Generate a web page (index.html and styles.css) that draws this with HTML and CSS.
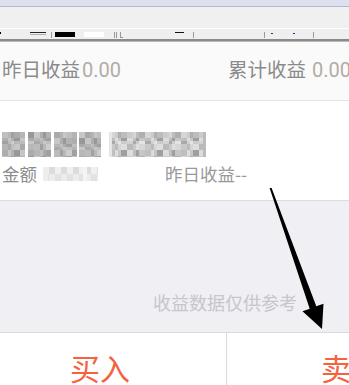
FILE: index.html
```html
<!DOCTYPE html>
<html lang="zh-CN">
<head>
<meta charset="utf-8">
<link rel="stylesheet" href="styles.css">
</head>
<body>
<div class="screen">
  <div class="chrome-top"></div>
  <div class="chrome-tabs"></div>
  <div class="toolbar">
    <i class="tm dot"></i>
    <i class="tm ul"></i>
    <i class="tm vl g5"></i>
    <i class="tm blk"></i>
    <i class="tm wht"></i>
    <i class="tm vl g10"></i>
    <i class="tm vl g1"></i>
    <i class="tm corner"></i>
    <i class="tm hl"></i>
    <i class="tm vl g9"></i>
    <i class="tm vl g70"></i>
    <i class="tm bdot g6"></i>
    <i class="tm bdot g20"></i>
    <i class="tm vl g18"></i>
  </div>

  <div class="summary">
    <div class="sum-item"><span class="lbl">昨日收益</span><span class="num n1">0.00</span></div>
    <div class="sum-item"><span class="lbl">累计收益</span><span class="num n2">0.00</span></div>
  </div>

  <div class="fund">
    <div class="fund-title">
      <span class="mz c1"></span><span class="mz c2"></span><span class="mz c3"></span><span class="mz c4"></span>
      <span class="mz code"></span>
    </div>
    <div class="fund-meta">
      <span class="meta-lbl">金额</span><span class="mz amt"></span>
      <span class="meta-lbl y">昨日收益--</span>
    </div>
  </div>

  <div class="gray-area">
    <p class="note">收益数据仅供参考</p>
  </div>

  <div class="actions">
    <div class="btn buy">买入</div>
    <div class="btn sell">卖出</div>
  </div>

  <svg class="arrow" width="349" height="385" viewBox="0 0 349 385">
    <polygon points="269.6,188 271.6,188 316.3,306.3 323.5,303.8 322,329 302.5,311.2 309.7,308.7" fill="#000"/>
  </svg>
</div>
</body>
</html>
```

FILE: styles.css
```css
html, body {
  margin: 0;
  padding: 0;
  background: #efeff4;
}
.screen {
  position: relative;
  width: 349px;
  height: 385px;
  overflow: hidden;
  font-family: Roboto, "Noto Sans CJK SC", sans-serif;
}
.chrome-top {
  height: 6px;
  background: #dde1ef;
  border-bottom: 1px solid #b4b8cb;
}
.chrome-tabs {
  height: 21px;
  background: #f0f0f0;
  border-bottom: 1px solid #ffffff;
}
.toolbar {
  height: 7px;
  padding-top: 3px;
  background: #efefef;
  border-bottom: 2px solid #8a8a8a;
  display: flex;
  align-items: flex-start;
}
.tm { display: block; flex: none; }
.dot { width: 1px; height: 2px; background: #000; }
.ul { margin-left: 29px; width: 16px; height: 1px; border-top: 1px solid #222; border-bottom: 1px solid #b0b0b0; }
.vl { width: 1px; height: 6px; background: #9a9a9a; }
.g5 { margin-left: 5px; }
.g10 { margin-left: 10px; }
.g1 { margin-left: 1px; }
.g9 { margin-left: 9px; }
.g70 { margin-left: 70px; }
.g6 { margin-left: 6px; }
.g20 { margin-left: 20px; }
.g18 { margin-left: 18px; }
.blk { margin-left: 3px; width: 20px; height: 5px; background: #000; }
.wht { margin-left: 9px; width: 20px; height: 5px; background: #fff; }
.corner { margin-left: 3px; width: 2px; height: 5px; border-left: 1px solid #9a9a9a; border-bottom: 1px solid #9a9a9a; }
.hl { margin-left: 52px; width: 9px; height: 1px; background: #111; }
.bdot { width: 2px; height: 1px; margin-top: 1px; background: #2a2a9a; }

.summary {
  background: #fafafa;
  border-top: 1px solid #b8b8b8;
  border-bottom: 1px solid #e2e2e2;
  display: grid;
  grid-template-columns: 226px auto;
  align-items: center;
  padding-left: 2px;
  box-sizing: border-box;
  height: 60px;
  padding-bottom: 6px;
  white-space: nowrap;
}
.sum-item { display: flex; align-items: baseline; }
.lbl {
  font-family: "Noto Sans CJK SC", sans-serif;
  font-size: 19.5px;
  color: #8a8a8a;
}
.num {
  font-family: Roboto, sans-serif;
  font-size: 20px;
  color: #b3aba6;
}
.n1 { margin-left: 2px; }
.n2 { margin-left: 6px; }

.fund {
  background: #fff;
  border-bottom: 1px solid #dcdcdc;
  box-sizing: border-box;
  height: 100px;
  padding-top: 31px;
  padding-left: 2px;
}
.fund-title {
  display: flex;
  height: 25px;
}
.mz { display: block; flex: none; }
.c1, .c2, .c3, .c4 {
  width: 23px;
  height: 25px;
  margin-right: 2px;
  background:
    conic-gradient(from 90deg, rgba(255,255,255,0.25) 25%, rgba(0,0,0,0) 0 50%, rgba(255,255,255,0.15) 0 75%, rgba(0,0,0,0.05) 0) 0 0 / 18px 18px,
    conic-gradient(#a9a9a9 25%, #bcbcbc 0 50%, #a0a0a0 0 75%, #b4b4b4 0) 0 0 / 12px 12px;
}
.c2 { margin-left: 1px; background-position: 6px 0, 0 6px; }
.c3 { margin-left: 1px; background-position: 0 6px, 6px 0; }
.c4 { width: 22px; background-position: 6px 6px, 0 0; }
.code {
  margin-left: 6px;
  width: 100px;
  height: 25px;
  background:
    linear-gradient(90deg, #e6e6e6 0 3px, transparent 3px 94px, #bbb 94px 97px, #fff 97px),
    conic-gradient(from 90deg, rgba(255,255,255,0.4) 25%, rgba(0,0,0,0) 0 50%, rgba(255,255,255,0.25) 0 75%, rgba(0,0,0,0.06) 0) 0 0 / 18px 18px,
    conic-gradient(#bababa 25%, #d2d2d2 0 50%, #a9a9a9 0 75%, #c8c8c8 0) 0 0 / 12px 12px;
}
.fund-meta {
  margin-top: 5px;
  display: flex;
  align-items: center;
  height: 24px;
}
.meta-lbl {
  font-family: "Noto Sans CJK SC", sans-serif;
  font-size: 17.5px;
  color: #8c8c8c;
  line-height: 24px;
}
.amt {
  margin-left: 6px;
  width: 55px;
  height: 14px;
  background:
    linear-gradient(90deg, #eeeeee 0 5px, transparent 5px 40px, #f4f4f4 40px 44px, transparent 44px),
    conic-gradient(#dcdcdc 25%, #ececec 0 50%, #e2e2e2 0 75%, #f0f0f0 0) 0 0 / 12px 14px;
}
.meta-lbl.y {
  margin-left: 67px;
  color: #999;
}

.gray-area {
  background: #efeff4;
  border-bottom: 1px solid #d9d9de;
  box-sizing: border-box;
  height: 132px;
  padding-top: 89px;
}
.note {
  margin: 0 0 0 153px;
  font-family: "Noto Sans CJK SC", sans-serif;
  font-size: 18px;
  line-height: 24px;
  color: #c6c6cb;
  white-space: nowrap;
}

.actions {
  height: 60px;
  background: #fff;
  display: flex;
}
.btn {
  flex: none;
  font-family: "Noto Sans CJK SC", sans-serif;
  font-size: 30px;
  color: #f5623f;
  line-height: 40px;
  padding-top: 14px;
  white-space: nowrap;
}
.buy {
  width: 227px;
  border-right: 1px solid #dadada;
  padding-left: 70px;
  box-sizing: border-box;
}
.sell {
  padding-left: 94px;
}
.arrow {
  position: absolute;
  left: 0;
  top: 0;
}
```
